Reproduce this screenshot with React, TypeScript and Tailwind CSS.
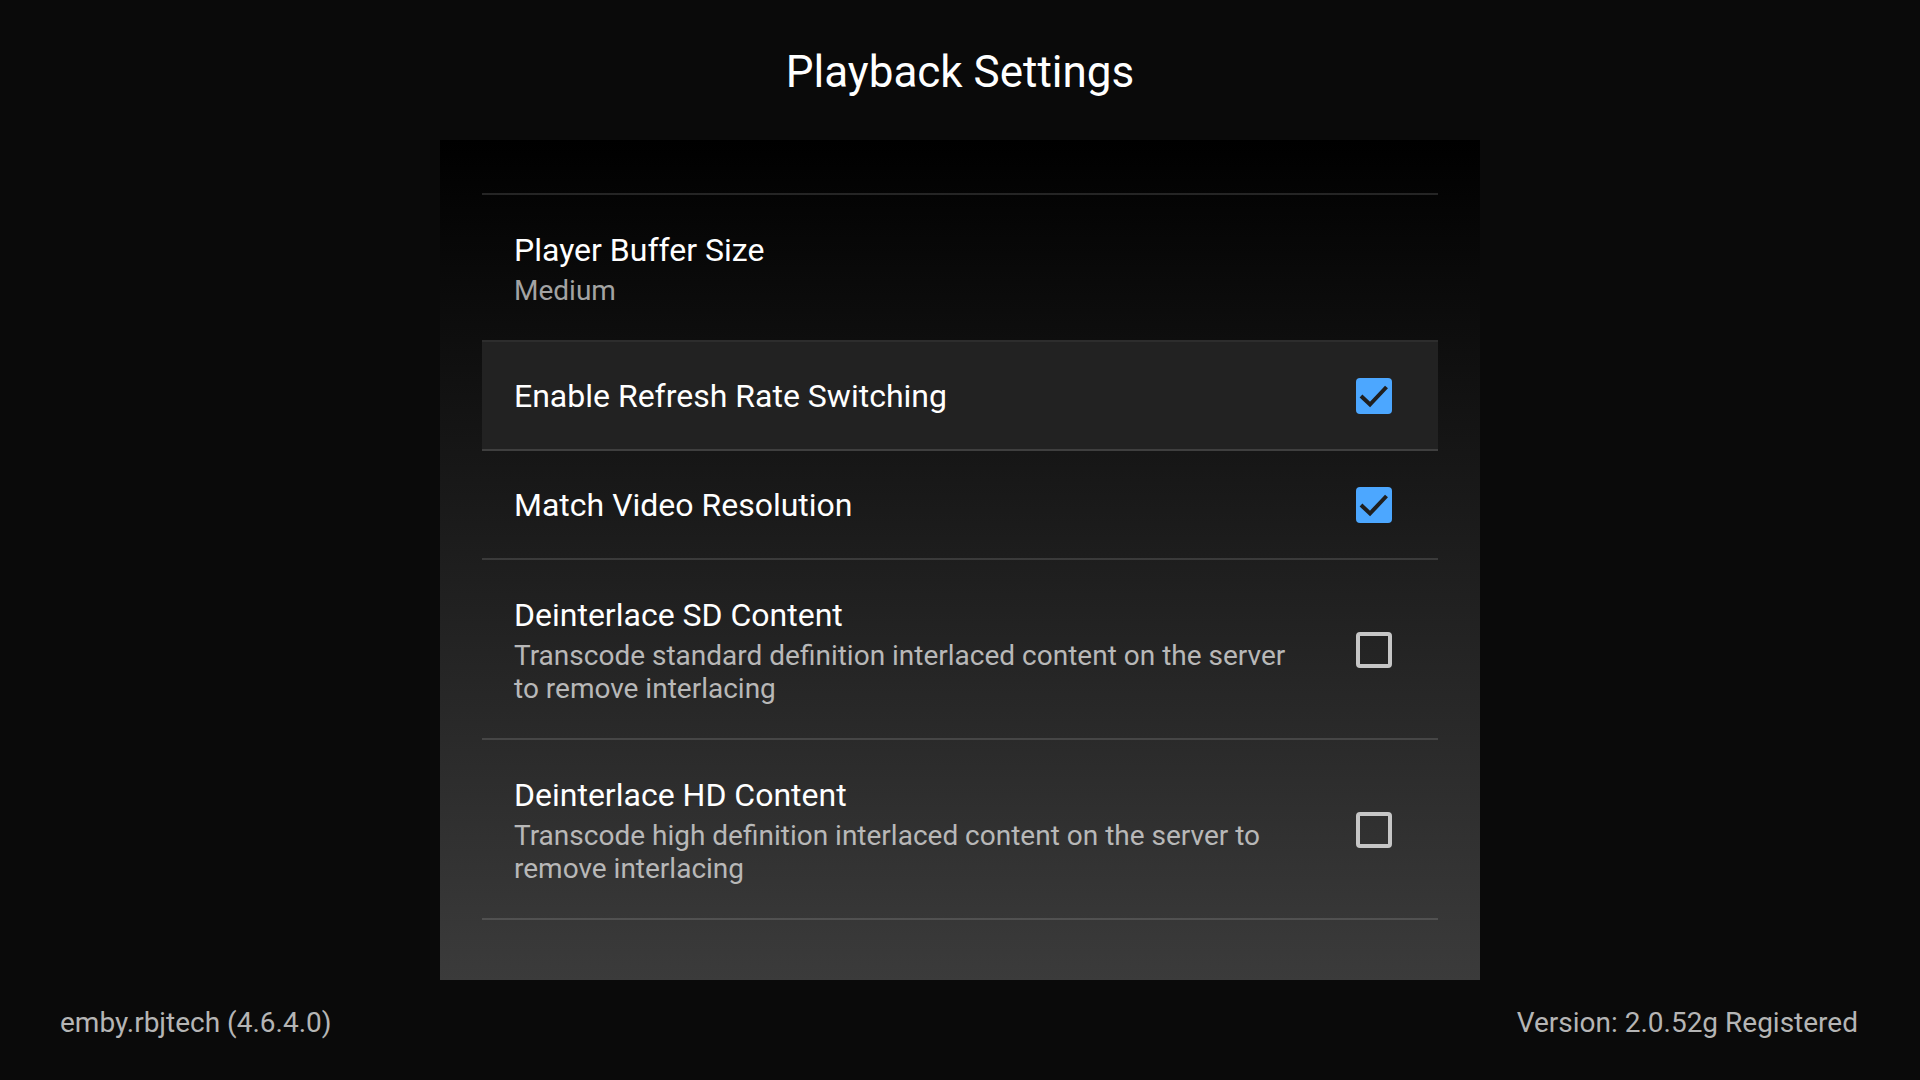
interface SettingRow {
  title: string;
  subtitle?: string;
  description?: string;
  checked?: boolean;
  focused?: boolean;
}

const rows: SettingRow[] = [
  { title: 'Player Buffer Size', subtitle: 'Medium' },
  { title: 'Enable Refresh Rate Switching', checked: true, focused: true },
  { title: 'Match Video Resolution', checked: true },
  {
    title: 'Deinterlace SD Content',
    description: 'Transcode standard definition interlaced content on the server to remove interlacing',
    checked: false,
  },
  {
    title: 'Deinterlace HD Content',
    description: 'Transcode high definition interlaced content on the server to remove interlacing',
    checked: false,
  },
];

function CheckBox({ checked }: { checked: boolean }) {
  if (checked) {
    return (
      <div className="w-9 h-9 rounded-[4px] bg-[#4ca7ff] flex items-center justify-center">
        <svg width="36" height="36" viewBox="0 0 36 36">
          <path d="M5 18 L14 26.5 L30.5 9" fill="none" stroke="#1f1f1f" strokeWidth="4" />
        </svg>
      </div>
    );
  }
  return <div className="w-9 h-9 rounded-[4px] border-[4px] border-[#c6c6c6]" />;
}

export default function App() {
  return (
    <div
      className="w-full min-h-screen h-[1080px] bg-[#0a0a0a] flex flex-col items-center"
      style={{ fontFamily: 'Roboto, "Noto Sans", sans-serif' }}
    >
      {/* Header */}
      <div className="h-[140px] w-full flex items-center justify-center pt-[4px]">
        <h1 className="text-[44px] leading-[52px] text-white">Playback Settings</h1>
      </div>

      {/* Settings panel */}
      <div className="w-[1040px] h-[840px] bg-[linear-gradient(to_bottom,#000000,#3b3b3b)] px-[42px] pt-[53px]">
        <div className="border-t-2 border-white/[0.13]">
          {rows.map((row) => (
            <div
              key={row.title}
              className={`flex items-center justify-between border-b-2 border-white/[0.13] pl-[32px] pr-[46px] ${
                row.focused ? 'bg-[#222222]' : ''
              } ${row.subtitle ? 'pt-[35px] pb-[31px]' : row.description ? 'pt-[35px] pb-[33px]' : 'h-[109px]'}`}
            >
              <div className="max-w-[785px]">
                <div className="text-[32px] leading-[40px] text-white">{row.title}</div>
                {row.subtitle && (
                  <div className="text-[28px] leading-[36px] text-[#a3a3a3] mt-[3px]">{row.subtitle}</div>
                )}
                {row.description && (
                  <div className="text-[28px] leading-[33px] text-[#b8b8b8] mt-[4px]">{row.description}</div>
                )}
              </div>
              {row.checked !== undefined && <CheckBox checked={row.checked} />}
            </div>
          ))}
        </div>
      </div>

      {/* Footer */}
      <div className="w-full flex justify-between pl-[60px] pr-[62px] pt-[25px] text-[28px] leading-[36px] text-[#b5b5b5]">
        <span>emby.rbjtech (4.6.4.0)</span>
        <span>Version: 2.0.52g Registered</span>
      </div>
    </div>
  );
}
